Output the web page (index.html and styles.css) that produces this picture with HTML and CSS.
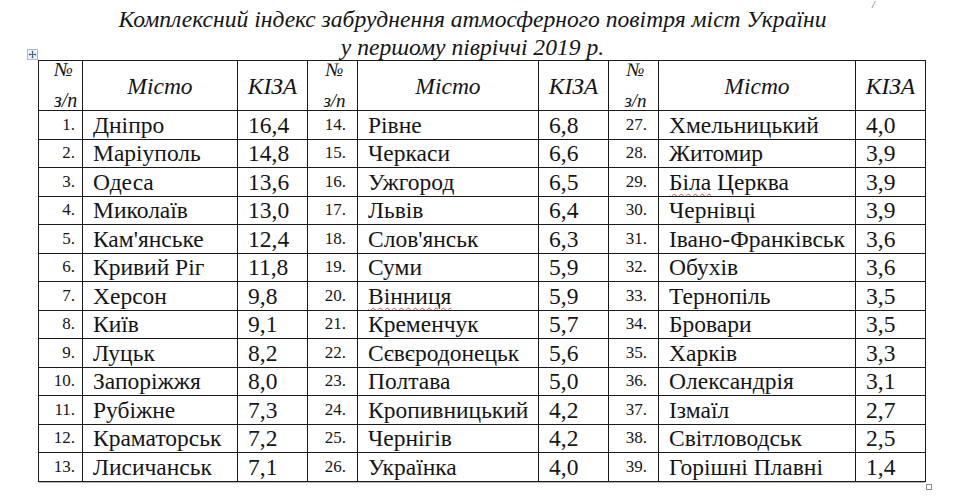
FILE: index.html
```html
<!DOCTYPE html>
<html>
<head>
<meta charset="utf-8">
<title>КІЗА</title>
<link rel="stylesheet" href="styles.css">
</head>
<body>
<div class="page">
  <div class="corner-mark">/</div>
  <div class="title">
    <div class="title-line">Комплексний індекс забруднення атмосферного повітря міст України</div>
    <div class="title-line">у першому півріччі 2019 р.</div>
  </div>
  <div class="table-wrap">
    <span class="move-handle">
      <svg width="11" height="11" viewBox="0 0 11 11">
        <rect x="0.5" y="0.5" width="10" height="10" fill="#f2f5fa" stroke="#a9b6c9"/>
        <path d="M5.5 2v7M2 5.5h7" stroke="#3f5f93" stroke-width="1"/>
        <path d="M5.5 1.6l-1.4 1.6h2.8zM5.5 9.4l-1.4-1.6h2.8zM1.6 5.5l1.6-1.4v2.8zM9.4 5.5l-1.6-1.4v2.8z" fill="#3f5f93"/>
      </svg>
    </span>
    <table class="kiza">
      <colgroup>
        <col class="c-num1"><col class="c-city1"><col class="c-val">
        <col class="c-num"><col class="c-city2"><col class="c-val">
        <col class="c-num"><col class="c-city3"><col class="c-val3">
      </colgroup>
      <thead>
        <tr class="head">
          <th class="h-num h-first"><div class="hn">№<br>з/п</div></th><th class="h-city">Місто</th><th class="h-val">КІЗА</th>
          <th class="h-num"><div class="hn">№<br>з/п</div></th><th class="h-city">Місто</th><th class="h-val">КІЗА</th>
          <th class="h-num"><div class="hn">№<br>з/п</div></th><th class="h-city">Місто</th><th class="h-val">КІЗА</th>
        </tr>
      </thead>
      <tbody>
        <tr><td class="n n-first">1.</td><td class="city">Дніпро</td><td class="v">16,4</td><td class="n">14.</td><td class="city">Рівне</td><td class="v">6,8</td><td class="n">27.</td><td class="city">Хмельницький</td><td class="v">4,0</td></tr>
        <tr><td class="n n-first">2.</td><td class="city">Маріуполь</td><td class="v">14,8</td><td class="n">15.</td><td class="city">Черкаси</td><td class="v">6,6</td><td class="n">28.</td><td class="city">Житомир</td><td class="v">3,9</td></tr>
        <tr><td class="n n-first">3.</td><td class="city">Одеса</td><td class="v">13,6</td><td class="n">16.</td><td class="city">Ужгород</td><td class="v">6,5</td><td class="n">29.</td><td class="city"><span class="spell">Біла</span> Церква</td><td class="v">3,9</td></tr>
        <tr><td class="n n-first">4.</td><td class="city">Миколаїв</td><td class="v">13,0</td><td class="n">17.</td><td class="city">Львів</td><td class="v">6,4</td><td class="n">30.</td><td class="city">Чернівці</td><td class="v">3,9</td></tr>
        <tr><td class="n n-first">5.</td><td class="city">Кам'янське</td><td class="v">12,4</td><td class="n">18.</td><td class="city">Слов'янськ</td><td class="v">6,3</td><td class="n">31.</td><td class="city">Івано-Франківськ</td><td class="v">3,6</td></tr>
        <tr><td class="n n-first">6.</td><td class="city">Кривий Ріг</td><td class="v">11,8</td><td class="n">19.</td><td class="city">Суми</td><td class="v">5,9</td><td class="n">32.</td><td class="city">Обухів</td><td class="v">3,6</td></tr>
        <tr><td class="n n-first">7.</td><td class="city">Херсон</td><td class="v">9,8</td><td class="n">20.</td><td class="city"><span class="spell">Вінниця</span></td><td class="v">5,9</td><td class="n">33.</td><td class="city">Тернопіль</td><td class="v">3,5</td></tr>
        <tr><td class="n n-first">8.</td><td class="city">Київ</td><td class="v">9,1</td><td class="n">21.</td><td class="city">Кременчук</td><td class="v">5,7</td><td class="n">34.</td><td class="city">Бровари</td><td class="v">3,5</td></tr>
        <tr><td class="n n-first">9.</td><td class="city">Луцьк</td><td class="v">8,2</td><td class="n">22.</td><td class="city">Сєвєродонецьк</td><td class="v">5,6</td><td class="n">35.</td><td class="city">Харків</td><td class="v">3,3</td></tr>
        <tr><td class="n n-first">10.</td><td class="city">Запоріжжя</td><td class="v">8,0</td><td class="n">23.</td><td class="city">Полтава</td><td class="v">5,0</td><td class="n">36.</td><td class="city">Олександрія</td><td class="v">3,1</td></tr>
        <tr><td class="n n-first">11.</td><td class="city">Рубіжне</td><td class="v">7,3</td><td class="n">24.</td><td class="city">Кропивницький</td><td class="v">4,2</td><td class="n">37.</td><td class="city">Ізмаїл</td><td class="v">2,7</td></tr>
        <tr><td class="n n-first">12.</td><td class="city">Краматорськ</td><td class="v">7,2</td><td class="n">25.</td><td class="city">Чернігів</td><td class="v">4,2</td><td class="n">38.</td><td class="city">Світловодськ</td><td class="v">2,5</td></tr>
        <tr><td class="n n-first">13.</td><td class="city">Лисичанськ</td><td class="v">7,1</td><td class="n">26.</td><td class="city">Українка</td><td class="v">4,0</td><td class="n">39.</td><td class="city">Горішні Плавні</td><td class="v">1,4</td></tr>
      </tbody>
    </table>
    <span class="resize-handle"></span>
  </div>
</div>
</body>
</html>
```

FILE: styles.css
```css
html, body {
  margin: 0;
  padding: 0;
  background: #ffffff;
}

body {
  width: 960px;
  height: 497px;
  overflow: hidden;
  font-family: "Liberation Serif", serif;
  color: #151515;
}

.page {
  position: relative;
  width: 960px;
}

.corner-mark {
  position: absolute;
  left: 872px;
  top: 0;
  font-size: 10px;
  line-height: 10px;
  font-style: italic;
  color: #444;
}

.title {
  box-sizing: border-box;
  height: 60px;
  padding: 5px 0 0 0;
  width: 945px;
  text-align: center;
  font-style: italic;
  font-size: 23.6px;
  line-height: 28px;
}

.table-wrap {
  position: relative;
  margin-left: 38px;
  width: 888px;
}

.move-handle {
  position: absolute;
  left: -11px;
  top: -11px;
  width: 11px;
  height: 11px;
  line-height: 0;
}

.resize-handle {
  position: absolute;
  right: -6px;
  bottom: -8px;
  width: 4px;
  height: 4px;
  border: 1px solid #8a8a8a;
  background: #fff;
}

.kiza {
  border-collapse: collapse;
  table-layout: fixed;
  width: 887px;
  font-family: "Liberation Serif", serif;
  box-shadow: 0 2px 0 -1px #b5b5b5;
}

.c-num1 { width: 44px; }
.c-city1 { width: 155px; }
.c-val { width: 70px; }
.c-num { width: 50px; }
.c-city2 { width: 181px; }
.c-city3 { width: 197px; }
.c-val3 { width: 70px; }

.kiza th,
.kiza td {
  border: 1px solid #1a1a1a;
  overflow: hidden;
  white-space: nowrap;
}

.head {
  height: 50px;
}

.head th {
  padding: 0;
  font-weight: normal;
  font-style: italic;
  vertical-align: middle;
  line-height: 24px;
}

.head th.h-city,
.head th.h-val {
  font-size: 23.5px;
  text-align: center;
}

.head th.h-num {
  font-size: 19px;
  text-align: center;
  padding-left: 4px;
  vertical-align: top;
}

.hn {
  line-height: 31px;
  margin-top: -7px;
  height: 56px;
  overflow: hidden;
}

.head th.h-first {
  text-align: left;
  padding-left: 15px;
  font-size: 20px;
}

.kiza tbody tr {
  height: 28.5px;
}

.kiza tbody td {
  padding: 0;
  line-height: 20px;
  vertical-align: middle;
}

.kiza td.n {
  font-size: 17px;
  text-align: right;
  padding-right: 11px;
}

.kiza td.n-first {
  padding-right: 7px;
}

.kiza td.city,
.kiza td.v {
  font-size: 23.5px;
  padding-left: 10px;
  text-align: left;
}

.spell {
  text-decoration: underline wavy #e05050;
  text-decoration-thickness: 1px;
  text-underline-offset: 3px;
}
```
